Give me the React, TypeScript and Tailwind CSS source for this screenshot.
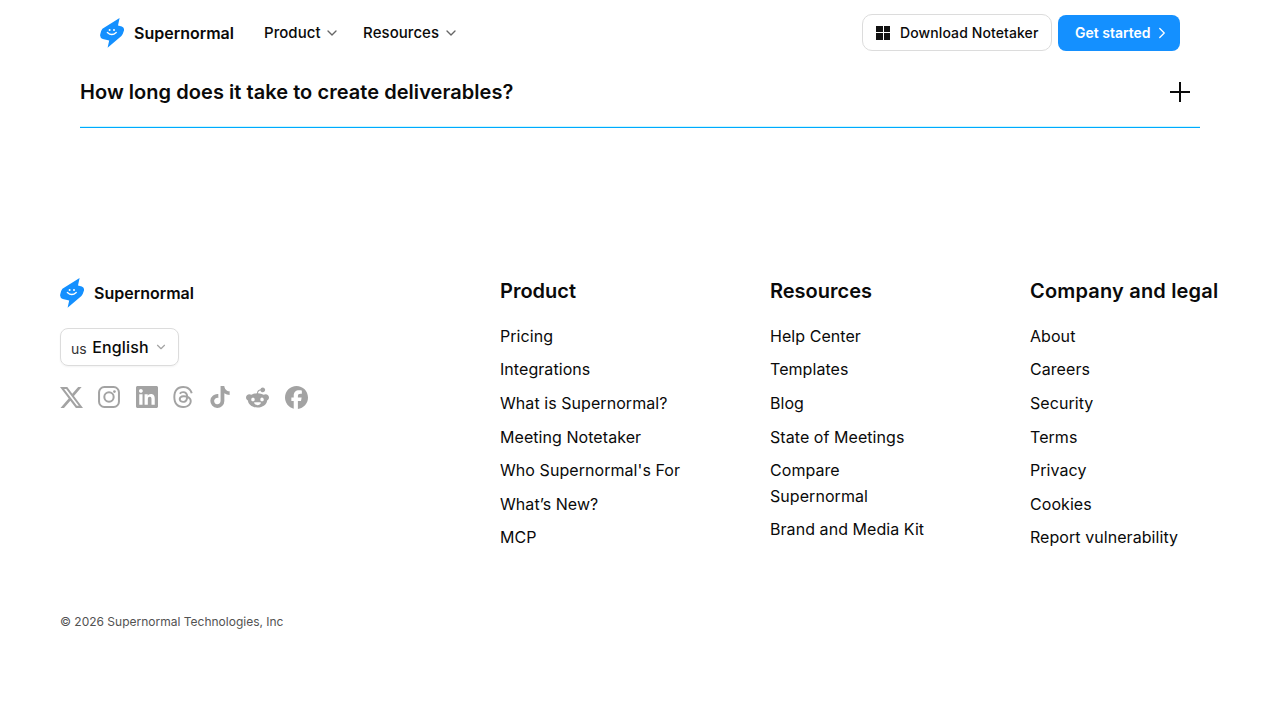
import { ChevronDown, ChevronRight } from "lucide-react"
import { FaFacebook, FaRedditAlien, FaTiktok } from "react-icons/fa6"
import { SiLinkedin, SiThreads, SiX } from "react-icons/si"

const columns = [
  {
    title: "Product",
    width: "w-[270px]",
    heading: "",
    links: ["Pricing", "Integrations", "What is Supernormal?", "Meeting Notetaker", "Who Supernormal's For", "What’s New?", "MCP"],
  },
  {
    title: "Resources",
    width: "w-[170px] mr-[90px]",
    heading: "",
    links: ["Help Center", "Templates", "Blog", "State of Meetings", "Compare Supernormal", "Brand and Media Kit"],
  },
  {
    title: "Company and legal",
    width: "w-[190px]",
    heading: "tracking-[0.18px]",
    links: ["About", "Careers", "Security", "Terms", "Privacy", "Cookies", "Report vulnerability"],
  },
]

function Logo() {
  return (
    <div className="flex items-center gap-[10px]">
      <svg width="24" height="30" viewBox="0 0 24 30" className="shrink-0">
        <path
          d="M19.6 0 L18 7.4 L21.8 8.6 Q24.8 9.8 23.8 13 Q23 16 21.4 18 L7.6 29.8 L9.2 22.4 L2.8 21 Q-0.4 19.8 0.2 16.6 Q0.6 13 2.4 10.8 Z"
          fill="#1490ff"
        />
        <circle cx="9.6" cy="12" r="1" fill="#fff" />
        <circle cx="14" cy="12" r="1" fill="#fff" />
        <path d="M7.4 14.4 Q11.8 18.6 16.2 14.4" fill="none" stroke="#fff" strokeWidth="1.4" strokeLinecap="round" />
      </svg>
      <span className="text-[16px] font-semibold text-[#0a0a0a]">Supernormal</span>
    </div>
  )
}

function NavItem({ label }: { label: string }) {
  return (
    <div className="flex items-center gap-[3.5px] text-[15px] font-medium tracking-[0.05px] text-[#0a0a0a]">
      {label}
      <ChevronDown className="w-[16px] h-[16px] text-[#666]" strokeWidth={2} />
    </div>
  )
}

export default function App() {
  return (
    <div className="w-[1280px] h-[720px] overflow-hidden bg-white font-['Inter',sans-serif]">
      {/* Top nav */}
      <header className="h-[66px] px-[100px] flex items-center justify-between">
        <div className="flex items-center gap-[30px]">
          <Logo />
          <div className="flex items-center gap-[23px]">
            <NavItem label="Product" />
            <NavItem label="Resources" />
          </div>
        </div>
        <div className="flex items-center gap-[6px]">
          <button className="h-[37px] mb-[1px] w-[190px] flex items-center gap-[10px] pl-[13px] rounded-[10px] border border-[#dcdcdc] bg-white text-[14px] font-medium tracking-[0.1px] text-[#0a0a0a]">
            <span className="grid grid-cols-2 gap-[1px] w-[14px] h-[14px]">
              <span className="bg-[#111]" />
              <span className="bg-[#111]" />
              <span className="bg-[#111]" />
              <span className="bg-[#111]" />
            </span>
            Download Notetaker
          </button>
          <button className="h-[36px] w-[122px] flex items-center gap-[2px] pl-[17px] pb-[1px] rounded-[8px] bg-[#1490ff] text-[14px] font-semibold text-white">
            Get started
            <ChevronRight className="w-[18px] h-[18px]" strokeWidth={1.75} />
          </button>
        </div>
      </header>

      {/* FAQ row */}
      <div className="mx-[80px] h-[62px] pb-[10px] border-b border-[#00a8ff] shadow-[inset_0_-1px_0_#c8f8ff] flex items-center justify-between">
        <h3 className="text-[20px] font-semibold tracking-[0.05px] text-[#0a0a0a]">How long does it take to create deliverables?</h3>
        <svg width="20" height="20" viewBox="0 0 20 20" className="mr-[10px]">
          <path d="M10 0V20M0 10H20" stroke="#0a0a0a" strokeWidth="2" />
        </svg>
      </div>

      {/* Footer */}
      <footer className="mt-[150px] pl-[60px] flex">
        <div className="w-[440px]">
          <Logo />
          <button className="mt-[20px] h-[38px] w-[119px] flex items-center gap-[5.5px] pl-[10px] rounded-[8px] border border-[#dcdcdc] shadow-[0_1px_2px_rgba(0,0,0,0.05)]">
            <span className="pt-[2px] text-[14px] text-[#333]">us</span>
            <span className="text-[16px] font-medium tracking-[0.15px] text-[#0a0a0a]">English</span>
            <ChevronDown className="w-[14px] h-[14px] text-[#a3a3a3]" />
          </button>
          <div className="mt-[19.5px] flex items-center gap-[14.5px] text-[#a3a3a3]">
            <SiX className="w-[23px] h-[23px]" />
            <svg width="22" height="22" viewBox="0 0 23 23" fill="none" stroke="currentColor" strokeWidth="2.1">
              <rect x="1.1" y="1.1" width="20.8" height="20.8" rx="5.5" />
              <circle cx="11.5" cy="11.5" r="4.9" />
              <circle cx="17.2" cy="5.8" r="1.4" fill="currentColor" stroke="none" />
            </svg>
            <SiLinkedin className="ml-[2px] w-[22px] h-[22px]" />
            <SiThreads className="-mx-[1px] w-[22px] h-[22px]" />
            <FaTiktok className="ml-[1.5px] w-[22px] h-[22px]" />
            <FaRedditAlien className="ml-[1px] w-[23px] h-[23px]" />
            <FaFacebook className="ml-[1px] w-[23px] h-[23px]" />
          </div>
        </div>

        {columns.map((col) => (
          <div key={col.title} className={`${col.width} shrink-0`}>
            <h4 className={`text-[20px] leading-[26px] font-semibold text-[#0a0a0a] whitespace-nowrap ${col.heading}`}>{col.title}</h4>
            <ul className="mt-[18.8px] flex flex-col gap-[7.6px]">
              {col.links.map((link) => (
                <li key={link} className="text-[16px] leading-[26px] tracking-[0.06px] text-[#0a0a0a] last:-mt-[0.4px]">
                  {link}
                </li>
              ))}
            </ul>
          </div>
        ))}
      </footer>

      <p className="mt-[63px] pl-[60px] text-[12px] leading-[18px] text-[#525252]">© 2026 Supernormal Technologies, Inc</p>
    </div>
  )
}
